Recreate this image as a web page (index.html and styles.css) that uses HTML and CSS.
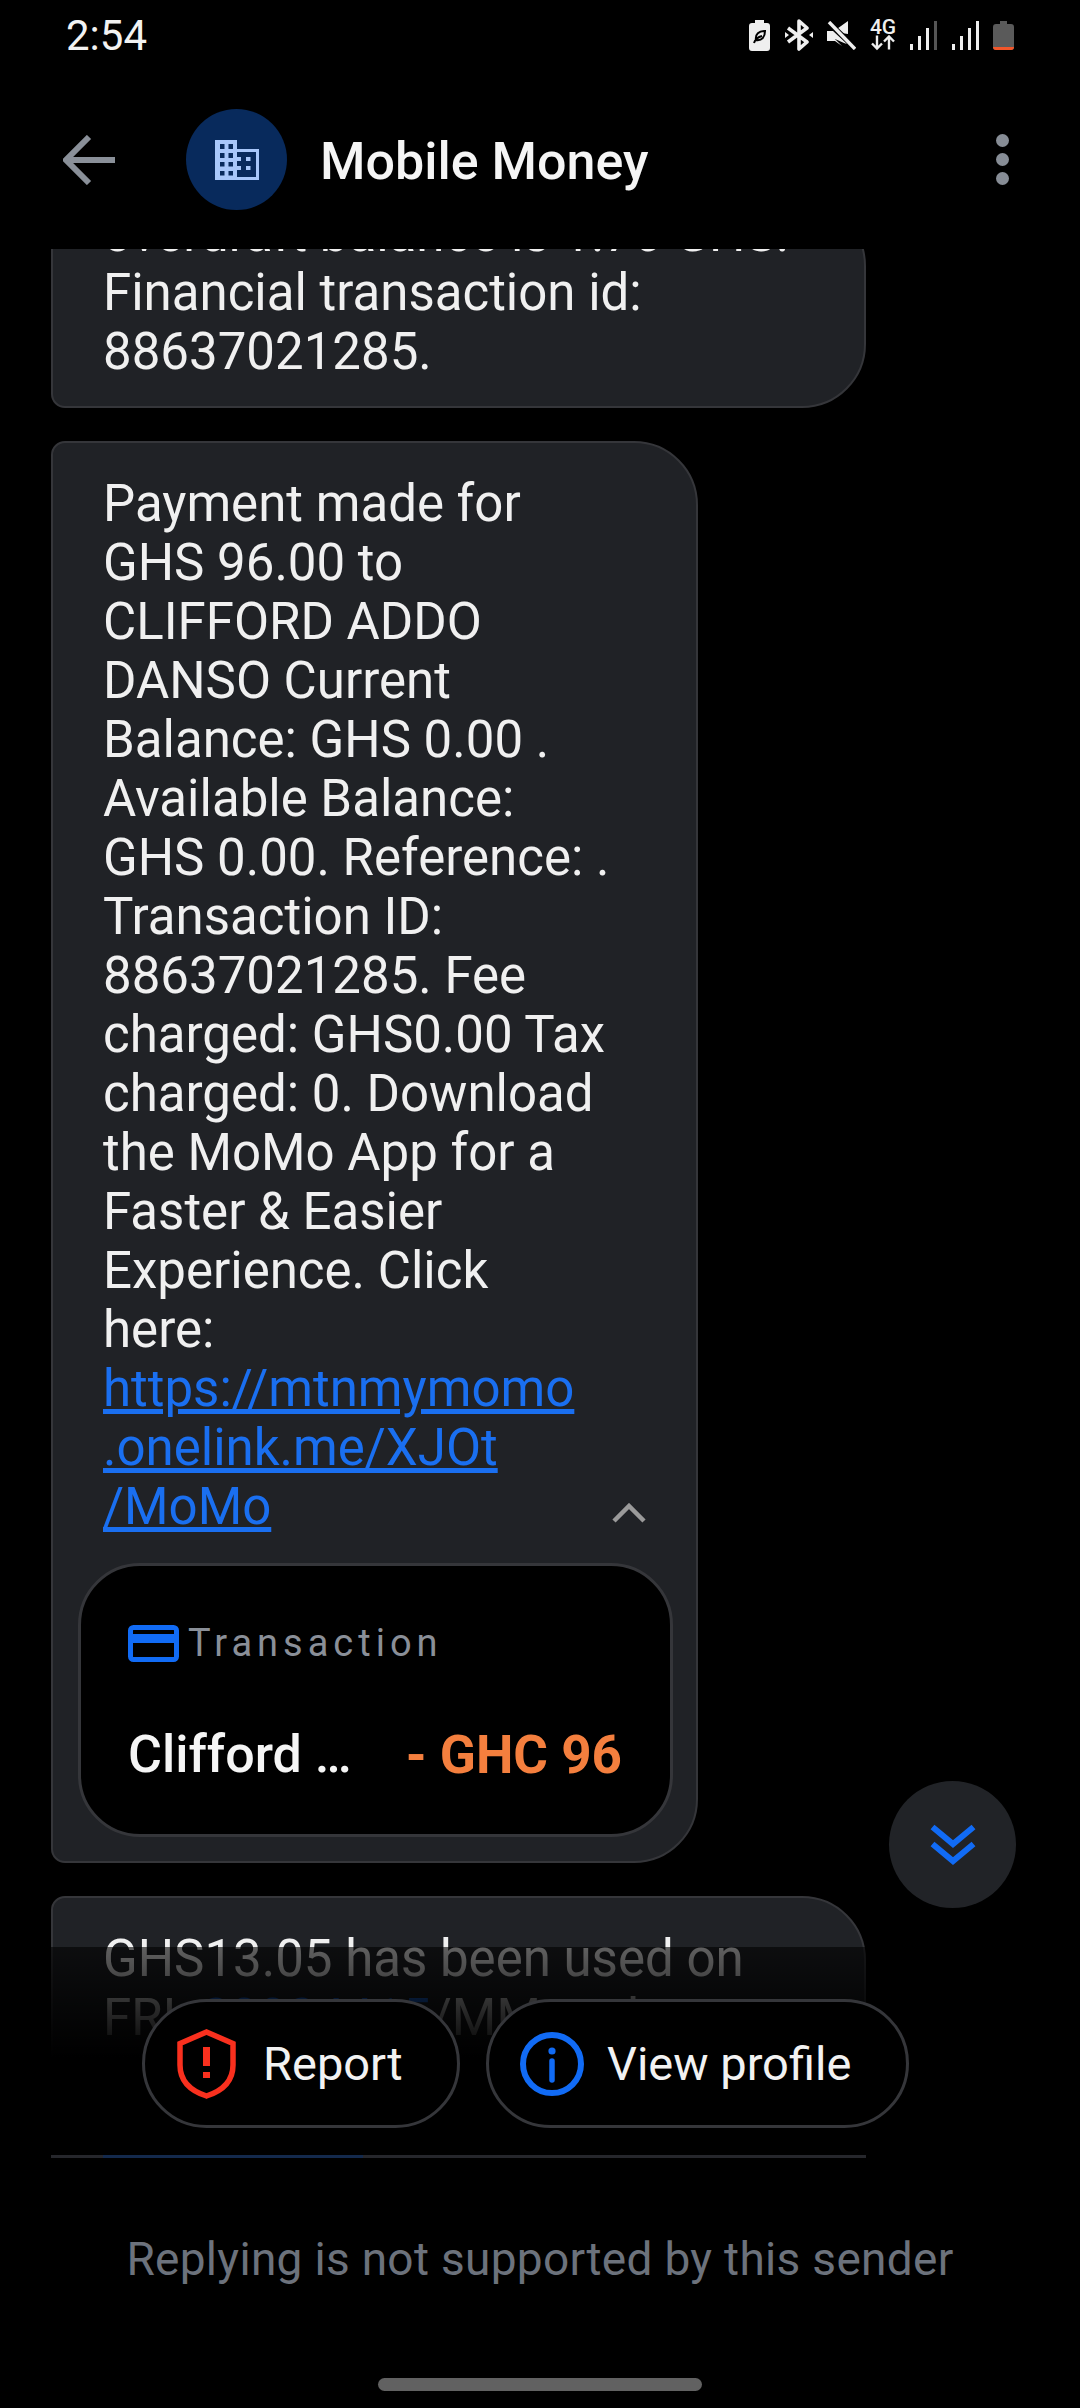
FILE: index.html
```html
<!DOCTYPE html>
<html lang="en">
<head>
  <meta charset="UTF-8" />
  <title>Mobile Money</title>
  <link rel="stylesheet" href="styles.css">
</head>
<body>
  <div class="status-bar">
    <span class="clock">2:54</span>
    <div class="status-icons">
      <svg width="21" height="31" viewBox="0 0 21 31"><path d="M6 0h9v3h3a3 3 0 0 1 3 3v22a3 3 0 0 1-3 3H3a3 3 0 0 1-3-3V6a3 3 0 0 1 3-3h3z" fill="#efefef"/><path d="M5 23c1-3 4-6 8-7M7 20c-1-6 3-9 9-9 0 6-3 10-9 9z" fill="none" stroke="#000" stroke-width="2"/></svg>
      <svg width="28" height="32" viewBox="0 0 28 32"><path d="M3 9l19 14-8 7V2l8 7L3 23" fill="none" stroke="#efefef" stroke-width="3.6" stroke-linejoin="round"/><path d="M0 13l4 3-4 3zM28 13l-4 3 4 3z" fill="#efefef"/></svg>
      <svg width="29" height="29" viewBox="0 0 29 29"><path d="M0 10h7L21 0v13zM0 10v10h8l7 5z" fill="#efefef"/><path d="M1 2l27 26" stroke="#000" stroke-width="7"/><path d="M2 1l26 27" stroke="#efefef" stroke-width="3.4"/><path d="M0 10h6l14 13-3-1-9-4H0z" fill="#efefef"/></svg>
      <div class="net-type">
        <span class="net-label">4G</span>
        <svg width="25" height="16" viewBox="0 0 25 15"><path d="M6 0v13M1 8l5 5 5-5M18 14V1M13 6l5-5 5 5" fill="none" stroke="#efefef" stroke-width="2.4"/></svg>
      </div>
      <svg width="27" height="29" viewBox="0 0 27 29"><rect x="0" y="23" width="3" height="6" fill="#efefef"/><rect x="8" y="15" width="3" height="14" fill="#efefef"/><rect x="16" y="7" width="3" height="22" fill="#efefef"/><rect x="24" y="0" width="3" height="29" fill="#555"/></svg>
      <svg width="27" height="29" viewBox="0 0 27 29"><rect x="0" y="23" width="3" height="6" fill="#efefef"/><rect x="8" y="15" width="3" height="14" fill="#efefef"/><rect x="16" y="7" width="3" height="22" fill="#efefef"/><rect x="24" y="0" width="3" height="29" fill="#efefef"/></svg>
      <svg width="21" height="29" viewBox="0 0 21 29"><path d="M7 0h7v3h4a3 3 0 0 1 3 3v20a3 3 0 0 1-3 3H3a3 3 0 0 1-3-3V6a3 3 0 0 1 3-3h4z" fill="#5a5a5a"/><path d="M0 26h21a3 3 0 0 1-3 3H3a3 3 0 0 1-3-3z" fill="#f2562a"/></svg>
    </div>
  </div>

  <header class="app-bar">
    <svg class="back" width="52" height="50" viewBox="0 0 52 50"><path d="M26 2L3 25l23 23M3 25h49" fill="none" stroke="#8a9099" stroke-width="6"/></svg>
    <div class="avatar">
      <svg width="44" height="40" viewBox="0 0 44 40"><path d="M0 0h22v9h22v31H0z" fill="#a8c7fa"/><path d="M22 12h19v25H22z" fill="#082a5c"/><path d="M5 4h4.500v5H5zM13.500 4H18v5h-4.500zM5 13h4.500v5H5zM13.500 13H18v5h-4.500zM5 22h4.500v4.500H5zM13.500 22H18v4.500h-4.500zM5 31h4.500v4.500H5zM13.500 31H18v4.500h-4.500z" fill="#082a5c"/><path d="M22 17h4v4h-4zM22 26h4v4h-4zM31 17h4.500v4H31zM31 26h4.500v4H31z" fill="#a8c7fa"/></svg>
    </div>
    <h1 class="title">Mobile Money</h1>
    <div class="more"><i></i><i></i><i></i></div>
  </header>

  <main class="thread">
    <div class="bubble bubble-first">
      overdraft balance is 1.76 GHS.<br>Financial transaction id:<br>88637021285.
    </div>

    <div class="bubble bubble-payment">
      Payment made for<br>GHS 96.00 to<br>CLIFFORD ADDO<br>DANSO Current<br>Balance: GHS 0.00 .<br>Available Balance:<br>GHS 0.00. Reference: .<br>Transaction ID:<br>88637021285. Fee<br>charged: GHS0.00 Tax<br>charged: 0. Download<br>the MoMo App for a<br>Faster &amp; Easier<br>Experience. Click<br>here:<br>
      <div class="link-row">
        <a class="link" href="#">https://mtnmymomo<br>.onelink.me/XJOt<br>/MoMo</a>
        <svg class="collapse" width="34" height="20" viewBox="0 0 34 20"><path d="M2 18L17 3l15 15" fill="none" stroke="#9a9a9a" stroke-width="4.5"/></svg>
      </div>
      <div class="txn-card">
        <div class="txn-head">
          <svg width="51" height="37" viewBox="0 0 51 37"><rect x="2.500" y="2.500" width="46" height="32" rx="3" fill="none" stroke="#116bf5" stroke-width="5"/><rect x="2" y="9" width="47" height="9" fill="#116bf5"/></svg>
          <span>Transaction</span>
        </div>
        <div class="txn-row">
          <span class="txn-name">Clifford …</span>
          <span class="txn-amount">- GHC 96</span>
        </div>
      </div>
    </div>

    <div class="bubble bubble-next">
      GHS13.05 has been used on<br>FRI: <a class="link" href="#">23324415</a>/MM at the
    </div>

    <div class="fade"></div>

    <button class="fab">
      <svg width="46" height="42" viewBox="0 0 46 42"><path d="M2.500 3L23 20 43.500 3M2.500 20L23 37 43.500 20" fill="none" stroke="#116bf5" stroke-width="6"/></svg>
    </button>

    <div class="actions">
      <button class="pill pill-report">
        <svg width="59" height="70" viewBox="0 0 59 70"><path d="M29.500 3L56 14.500V36C56 52 45 62 29.500 67 14 62 3 52 3 36V14.500z" fill="none" stroke="#f9301e" stroke-width="5.500"/><path d="M26 18h7v19h-7zM26 43h7v6h-7z" fill="#f9301e"/></svg>
        Report
      </button>
      <button class="pill pill-profile">
        <svg width="64" height="64" viewBox="0 0 64 64"><circle cx="32" cy="32" r="29" fill="none" stroke="#116bf5" stroke-width="6"/><circle cx="32" cy="19" r="3.600" fill="#116bf5"/><path d="M32 29v19" stroke="#116bf5" stroke-width="5.500" stroke-linecap="round"/></svg>
        View profile
      </button>
    </div>
  </main>

  <div class="divider"><span></span></div>
  <div class="no-reply">Replying is not supported by this sender</div>
  <div class="home-bar"></div>
</body>
</html>
```

FILE: styles.css
```css
*, *::before, *::after { box-sizing: border-box; margin: 0; padding: 0; }
html, body { height: 2408px; }
body { width: 1080px; background: #000; color: #f0f0f0; font-family: Roboto, 'Noto Sans', sans-serif; display: flex; flex-direction: column; overflow: hidden; }

/* status bar */
.status-bar { height: 70px; flex: none; display: flex; align-items: center; justify-content: space-between; padding: 0 66px; }
.clock { font-size: 42px; color: #f2f2f2; }
.status-icons { display: flex; align-items: center; gap: 14.5px; }
.net-type { display: flex; flex-direction: column; align-items: center; width: 25px; height: 31px; }
.net-label { font-size: 21px; font-weight: 500; line-height: 15px; color: #efefef; }

/* app bar */
.app-bar { height: 179px; flex: none; display: flex; align-items: center; padding: 0 71px 0 63px; }
.back { flex: none; }
.avatar { width: 101px; height: 101px; border-radius: 50%; background: #082a5c; display: flex; align-items: center; justify-content: center; margin-left: 71px; flex: none; }
.title { font-size: 52px; font-weight: 500; color: #f5f5f5; margin-left: 33px; padding-top: 3px; flex: 1; }
.more { display: flex; flex-direction: column; gap: 6px; }
.more i { display: block; width: 13px; height: 13px; border-radius: 50%; background: #878d96; }

/* thread */
.thread { position: relative; flex: 1; overflow: hidden; padding-left: 51px; }
.bubble { background: #202226; border: 2px solid #35363a; border-radius: 14px 64px 64px 14px; font-size: 51px; line-height: 59px; padding: 31px 0 33px 50px; white-space: nowrap; color: #f0f0f0; }
.bubble-first { width: 815px; height: 206px; margin-top: -47px; padding-top: 0; padding-bottom: 0; }
.bubble-payment { width: 647px; margin-top: 33px; padding-bottom: 24px; }
.bubble-next { width: 815px; margin-top: 33px; }
.link { color: #1a6ff0; text-decoration: underline; }
.link-row { display: flex; align-items: flex-end; justify-content: space-between; padding-right: 50px; }
.collapse { margin-bottom: 13px; }

.txn-card { background: #000; border: 3px solid #35363a; border-radius: 62px; width: 595px; height: 274px; margin: 27px 0 0 -25px; padding: 57px 48px 0 47px; }
.txn-head { display: flex; align-items: center; gap: 9px; font-size: 38px; line-height: 40px; letter-spacing: 5px; color: #8a8f98; }
.txn-row { display: flex; justify-content: space-between; margin-top: 62px; line-height: 60px; }
.txn-name { font-size: 52px; font-weight: 500; color: #f5f5f5; }
.txn-amount { font-size: 53px; font-weight: 700; color: #f47f3e; }

.fade { position: absolute; left: 0; right: 0; top: 1698px; height: 130px; background: linear-gradient(rgba(0,0,0,0.6), #000 85%); }
.thread::after { content: ""; position: absolute; left: 0; right: 0; bottom: 0; height: 78px; background: #000; }

.fab { position: absolute; left: 889px; top: 1532px; width: 127px; height: 127px; border: none; border-radius: 50%; background: #212327; display: flex; align-items: center; justify-content: center; }

.actions { position: absolute; left: 142px; top: 1750px; display: flex; gap: 26px; z-index: 1; }
.pill { height: 129px; background: #000; border: 3px solid #35363a; border-radius: 65px; display: flex; align-items: center; font-family: inherit; font-size: 47px; color: #f2f2f2; }
.pill-report { width: 318px; padding-left: 32px; gap: 27px; }
.pill-profile { width: 423px; padding-left: 31px; gap: 23px; }

/* bottom */
.divider { height: 3px; flex: none; margin: 0 214px 0 51px; background: #26272c; }
.divider span { display: block; height: 100%; width: 260px; margin-left: 52px; background: #142a4d; }
.no-reply { flex: none; height: 220px; padding-top: 76px; text-align: center; font-size: 46px; line-height: 50px; color: #6c727c; letter-spacing: 0.3px; }
.home-bar { flex: none; width: 324px; height: 13px; border-radius: 7px; background: #616161; margin: 0 0 17px 378px; }
```
